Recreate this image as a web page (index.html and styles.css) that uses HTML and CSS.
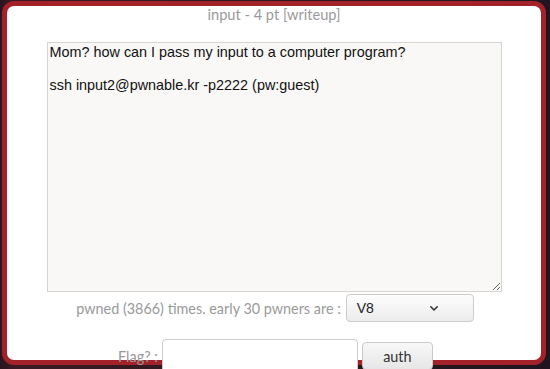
FILE: index.html
```html
<!DOCTYPE html>
<html>
<head>
<meta charset="utf-8">
<link rel="stylesheet" href="styles.css">
</head>
<body>
<div class="modal">
  <div class="title">input - 4 pt [writeup]</div>
  <textarea class="desc" readonly>Mom? how can I pass my input to a computer program?

ssh input2@pwnable.kr -p2222 (pw:guest)</textarea>
  <div class="row pwned">
    <span class="label">pwned (3866) times. early 30 pwners are :</span>
    <div class="select">
      <span>V8</span>
      <svg class="chev" width="10" height="7" viewBox="0 0 10 7"><path d="M1.8 1.8 L5 5 L8.2 1.8" fill="none" stroke="#333" stroke-width="1.6" stroke-linecap="round" stroke-linejoin="round"/></svg>
    </div>
  </div>
  <div class="row flag">
    <span class="label">Flag? :</span>
    <input class="flag-input" type="text">
    <button class="auth">auth</button>
  </div>
</div>
</body>
</html>
```
FILE: styles.css
```css
html, body {
  margin: 0;
  padding: 0;
}
body {
  width: 550px;
  height: 369px;
  overflow: hidden;
  background: linear-gradient(90deg, #2a1420 0%, #3b1a24 3%, #2b1a1c 50%, #1f1420 100%);
  font-family: Lato, "Liberation Sans", sans-serif;
}
.modal {
  box-sizing: border-box;
  margin: 1px 0 0 2px;
  width: 544px;
  height: 364px;
  border: 5px solid #a3222a;
  border-radius: 12px;
  background: #fff;
  display: flex;
  flex-direction: column;
  align-items: center;
}
.modal > * {
  flex-shrink: 0;
}
.title {
  color: #9a9a9a;
  font-size: 14.6px;
  line-height: 18px;
  text-align: center;
}
.desc {
  box-sizing: border-box;
  margin-top: 18px;
  width: 455px;
  height: 250px;
  border: 1px solid #d6d4d1;
  background: #f9f8f6;
  padding: 1px 2px;
  font-family: "Liberation Sans", Arial, sans-serif;
  font-size: 14.4px;
  line-height: 16.7px;
  color: #111;
  outline: none;
  resize: both;
}
.row {
  display: flex;
  align-items: center;
  justify-content: center;
}
.pwned {
  margin-top: 2px;
  gap: 5px;
  margin-left: 2px;
}
.label {
  color: #9a9a9a;
  font-size: 14.4px;
}
.select {
  box-sizing: border-box;
  width: 128px;
  height: 28px;
  border: 1px solid #ccc;
  border-radius: 4px;
  background: linear-gradient(#fdfdfd, #ececec);
  display: flex;
  align-items: center;
  padding: 0 30px 0 10px;
  font-family: "Liberation Sans", Arial, sans-serif;
  font-size: 14px;
  color: #222;
  position: relative;
}
.chev {
  position: absolute;
  right: 34px;
  top: 10px;
}
.flag {
  margin-top: 17px;
  gap: 4px;
  margin-left: 3px;
}
.flag-input {
  box-sizing: border-box;
  width: 196px;
  height: 34px;
  border: 1px solid #ccc;
  border-radius: 4px;
  background: #fff;
  margin: 0;
}
.auth {
  box-sizing: border-box;
  width: 71px;
  height: 28px;
  margin-left: 0;
  border: 1px solid #c8c8c8;
  border-radius: 4px;
  background: linear-gradient(#f8f8f8, #e6e6e6);
  font-family: Lato, "Liberation Sans", sans-serif;
  font-size: 14.4px;
  color: #333;
  padding: 0;
}
```
